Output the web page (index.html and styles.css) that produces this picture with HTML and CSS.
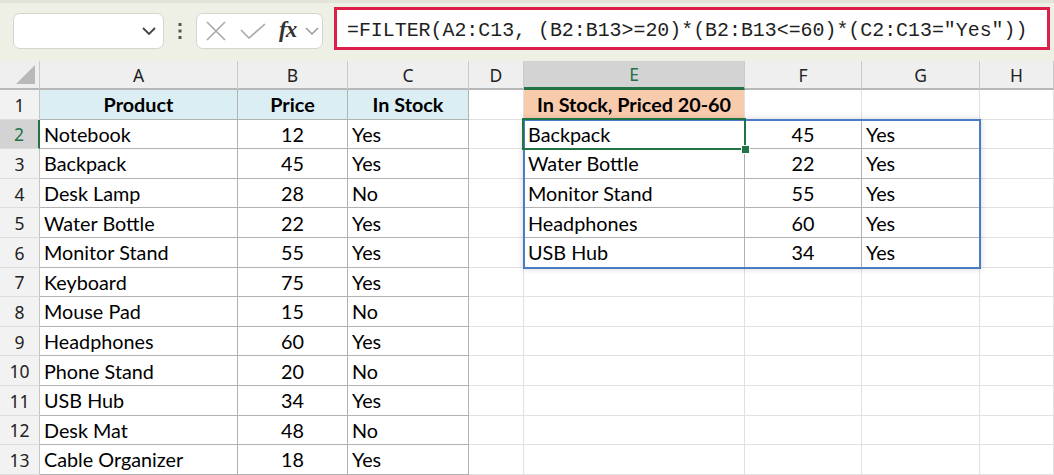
FILE: index.html
```html
<!DOCTYPE html>
<html lang="en">
  <head>
    <meta charset="UTF-8" />
    <meta name="viewport" content="width=device-width, initial-scale=1.0" />
    <title>FILTER example</title>
    <link rel="stylesheet" href="styles.css">
  </head>
  <body>
    <div class="topbar">
      <div class="namebox">
        <svg width="16" height="10" viewBox="0 0 16 10"><path d="M2 2 L8 8 L14 2" fill="none" stroke="#444" stroke-width="1.8"/></svg>
      </div>
      <div class="dots">
        <svg width="6" height="18" viewBox="0 0 6 18"><rect x="1.5" y="1" width="3" height="3" fill="#555"/><rect x="1.5" y="7.5" width="3" height="3" fill="#555"/><rect x="1.5" y="14" width="3" height="3" fill="#555"/></svg>
      </div>
      <div class="fxbox">
        <svg class="x-icon" width="20" height="20" viewBox="0 0 20 20"><path d="M1 1 L19 19 M19 1 L1 19" stroke="#a8a8a8" stroke-width="1.6"/></svg>
        <svg class="ok-icon" width="26" height="16" viewBox="0 0 26 16"><path d="M1 7 L9 15 L25 1" fill="none" stroke="#a8a8a8" stroke-width="1.6"/></svg>
        <span class="fx">fx</span>
        <svg class="fx-down" width="14" height="8" viewBox="0 0 14 8"><path d="M1 1 L7 7 L13 1" fill="none" stroke="#9a9a9a" stroke-width="1.5"/></svg>
      </div>
      <div class="formula">=FILTER(A2:C13, (B2:B13&gt;=20)*(B2:B13&lt;=60)*(C2:C13="Yes"))</div>
    </div>
    <div class="sheet">
      <div class="cells" id="cells"></div>
      <div class="marks">
        <div class="spill"></div>
        <div class="select"><span class="handle"></span></div>
      </div>
    </div>
    <script>
      let cells = document.getElementById("cells");
      let columns = ["A", "B", "C", "D", "E", "F", "G", "H"];
      let products = [
        ["Notebook", 12, "Yes"],
        ["Backpack", 45, "Yes"],
        ["Desk Lamp", 28, "No"],
        ["Water Bottle", 22, "Yes"],
        ["Monitor Stand", 55, "Yes"],
        ["Keyboard", 75, "Yes"],
        ["Mouse Pad", 15, "No"],
        ["Headphones", 60, "Yes"],
        ["Phone Stand", 20, "No"],
        ["USB Hub", 34, "Yes"],
        ["Desk Mat", 48, "No"],
        ["Cable Organizer", 18, "Yes"],
      ];
      // what the FILTER formula spills into E2
      let result = products.filter((p) => p[1] >= 20 && p[1] <= 60 && p[2] === "Yes");

      function tableRow(p) {
        return `
          <div class="cell tb">${p[0]}</div>
          <div class="cell tb num">${p[1]}</div>
          <div class="cell tb">${p[2]}</div>`;
      }

      function renderSheet() {
        let html = `<div class="corner"><svg width="40" height="27" viewBox="0 0 40 27"><polygon points="35,4 35,23 16,23" fill="#b9b9b9"/></svg></div>`;
        columns.forEach((c) => {
          html += `<div class="col-head${c === "E" ? " active" : ""}">${c}</div>`;
        });
        for (let r = 1; r <= 13; r++) {
          html += `<div class="row-head${r === 2 ? " active" : ""}">${r}</div>`;
          if (r === 1) {
            html += `
              <div class="cell th">Product</div>
              <div class="cell th">Price</div>
              <div class="cell th">In Stock</div>`;
          } else {
            html += tableRow(products[r - 2]);
          }
          html += `<div class="cell"></div>`;
          if (r === 1) {
            html += `<div class="cell title">In Stock, Priced 20-60</div><div class="cell"></div><div class="cell"></div>`;
          } else if (result[r - 2]) {
            html += tableRow(result[r - 2]);
          } else {
            html += `<div class="cell"></div><div class="cell"></div><div class="cell"></div>`;
          }
          html += `<div class="cell"></div>`;
        }
        cells.innerHTML = html;
      }
      renderSheet();
    </script>
  </body>
</html>
```

FILE: styles.css
```css
body {
  margin: 0;
  width: 1054px;
  height: 475px;
  overflow: hidden;
  background: #fff;
  font-family: Lato, "Liberation Sans", sans-serif;
}
.topbar {
  display: flex;
  align-items: flex-start;
  height: 61px;
  box-sizing: border-box;
  padding: 4px 0 0 13px;
  background: #eef0e6;
  border-top: 3px solid #e2e4da;
}
.namebox,
.fxbox {
  height: 36px;
  margin-top: 6px;
  box-sizing: border-box;
  background: #fff;
  border: 1px solid #d5d5d0;
  border-radius: 7px;
}
.namebox {
  width: 151px;
  display: flex;
  align-items: center;
  justify-content: flex-end;
  padding-right: 6px;
}
.dots {
  width: 32px;
  height: 36px;
  margin-top: 6px;
  display: flex;
  align-items: center;
  justify-content: center;
}
.fxbox {
  width: 127px;
  display: flex;
  align-items: center;
  padding-left: 9px;
}
.ok-icon {
  margin-left: 14px;
}
.fx {
  margin-left: 13px;
  font-family: "Liberation Serif", serif;
  font-style: italic;
  font-weight: bold;
  font-size: 23px;
  color: #333;
  letter-spacing: -1px;
  padding-bottom: 3px;
}
.fx-down {
  margin-left: 9px;
}
.formula {
  margin-left: 11px;
  width: 716px;
  height: 43px;
  box-sizing: border-box;
  border: 3px solid #dc1f48;
  background: #fff;
  padding: 4px 0 0 10px;
  display: flex;
  align-items: center;
  font-family: "Liberation Mono", monospace;
  font-size: 19.9px;
  color: #1f1f1f;
  white-space: pre;
}
.sheet {
  display: grid;
}
.cells,
.marks {
  grid-area: 1 / 1;
  display: grid;
  grid-template-columns: 40px 198px 110px 121px 55px 221px 117px 118px 74px;
  grid-template-rows: 29px repeat(13, 29.6px);
}
.marks {
  pointer-events: none;
}
.corner,
.col-head {
  box-sizing: border-box;
  background: #efefef;
  border-bottom: 2px solid #b8b8b8;
  border-right: 1px solid #cbcbcb;
}
.col-head,
.row-head {
  display: flex;
  align-items: center;
  justify-content: center;
  font-family: "Noto Sans", sans-serif;
  font-size: 17.5px;
  color: #222;
}
.col-head.active {
  background: #d3d3d3;
  color: #217346;
  border-bottom: 3px solid #217346;
}
.row-head {
  box-sizing: border-box;
  background: #f2f2f2;
  border-right: 1px solid #c4c4c4;
  border-bottom: 1px solid #dcdcdc;
  padding-top: 1px;
}
.row-head.active {
  background: #d3d3d3;
  color: #217346;
  border-right: 2px solid #217346;
}
.cell {
  box-sizing: border-box;
  display: flex;
  align-items: center;
  padding: 0 4px;
  border-right: 1px solid #e1e1e1;
  border-bottom: 1px solid #e1e1e1;
  font-size: 19.8px;
  color: #000;
  white-space: nowrap;
}
.tb,
.th {
  border-color: #b2b2b2;
}
.th {
  background: #dbeef4;
  font-weight: bold;
  justify-content: center;
}
.num {
  justify-content: center;
}
.title {
  background: #f8cbad;
  font-weight: bold;
  justify-content: center;
}
.spill {
  grid-column: 6 / 9;
  grid-row: 3 / 8;
  margin: -1px;
  border: 2px solid #4a7bc4;
  box-shadow: 0 0 6px rgba(0, 0, 0, 0.18);
}
.select {
  grid-column: 6 / 7;
  grid-row: 3 / 4;
  position: relative;
  margin: -2px -1px -1px -2px;
  border: 2px solid #217346;
}
.handle {
  position: absolute;
  right: -6px;
  bottom: -6px;
  width: 7px;
  height: 7px;
  background: #217346;
  border: 1px solid #fff;
}
```
